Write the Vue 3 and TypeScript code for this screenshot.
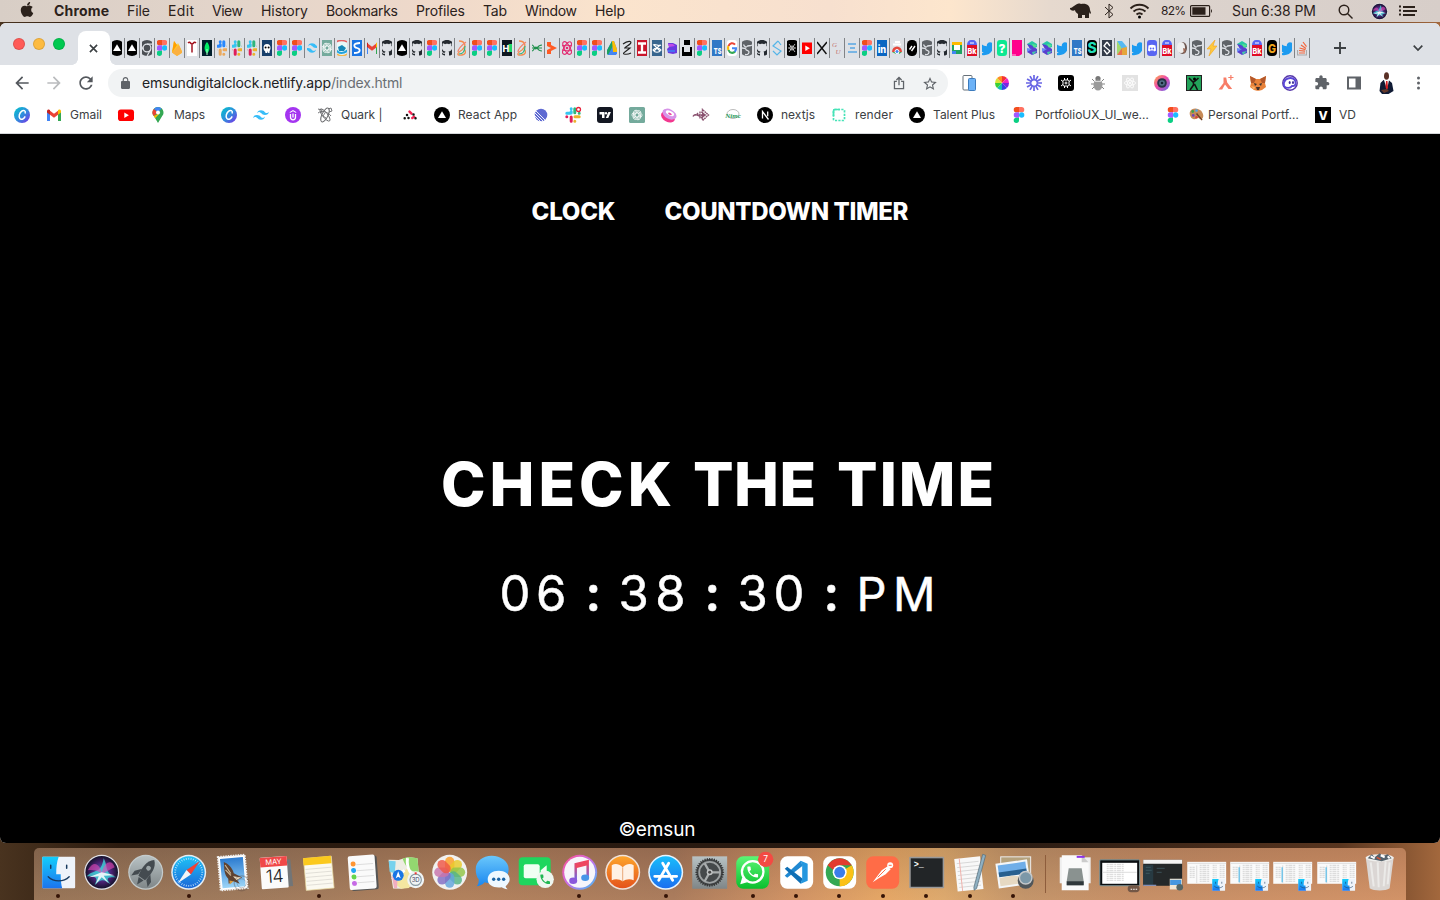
<script setup lang="ts">
import type { Directive } from 'vue'

// Spreads the letters of a label evenly over a given width in pixels.
const vFit: Directive<HTMLElement, number> = {
  mounted(el, { value }) {
    const count = (el.textContent ?? '').length
    const natural = el.getBoundingClientRect().width
    el.style.width = `${value}px`
    if (count > 1) el.style.letterSpacing = `${(value - natural) / (count - 1)}px`
  },
}

interface Label { text: string; width: number }
interface Bookmark { icon: string; text?: string; width?: number; extra?: string }
interface DockItem { name: string; running?: boolean }

const menus: Label[] = [
  { text: 'Chrome', width: 55 }, { text: 'File', width: 23 }, { text: 'Edit', width: 26 },
  { text: 'View', width: 31 }, { text: 'History', width: 47 }, { text: 'Bookmarks', width: 72 },
  { text: 'Profiles', width: 49 }, { text: 'Tab', width: 24 }, { text: 'Window', width: 52 },
  { text: 'Help', width: 30 },
]

const P = {
  apple: 'M318.7 268.7c-.2-36.7 16.4-64.4 50-84.8-18.8-26.9-47.2-41.7-84.7-44.6-35.5-2.8-74.3 20.7-88.5 20.7-15 0-49.4-19.7-76.4-19.7C63.3 141.2 4 184.8 4 273.5q0 39.3 14.4 81.2c12.8 36.7 59 126.7 107.2 125.2 25.2-.6 43-17.9 75.8-17.9 31.8 0 48.3 17.9 76.4 17.9 48.6-.7 90.4-82.5 102.6-119.3-65.2-30.7-61.7-90-61.7-91.9zm-56.6-164.2c27.3-32.4 24.8-61.9 24-72.5-24.1 1.4-52 16.4-67.9 34.9-17.5 19.8-27.8 44.3-25.6 71.9 26.1 2 49.9-11.4 69.5-34.2z',
  bird: 'M23.954 4.569c-.885.389-1.83.654-2.825.775 1.014-.611 1.794-1.574 2.163-2.723-.951.555-2.005.959-3.127 1.184-.896-.959-2.173-1.559-3.591-1.559-2.717 0-4.92 2.203-4.92 4.917 0 .39.045.765.127 1.124C7.691 8.094 4.066 6.13 1.64 3.161c-.427.722-.666 1.561-.666 2.475 0 1.71.87 3.213 2.188 4.096-.807-.026-1.566-.248-2.228-.616v.061c0 2.385 1.693 4.374 3.946 4.827-.413.111-.849.171-1.296.171-.314 0-.615-.03-.916-.086.631 1.953 2.445 3.377 4.604 3.417-1.68 1.319-3.809 2.105-6.102 2.105-.39 0-.779-.023-1.17-.067 2.189 1.394 4.768 2.209 7.557 2.209 9.054 0 13.999-7.496 13.999-13.986 0-.209 0-.42-.015-.63.961-.689 1.8-1.56 2.46-2.548l-.047-.02z',
  cat: 'M8 0C3.58 0 0 3.58 0 8c0 3.54 2.29 6.53 5.47 7.59.4.07.55-.17.55-.38 0-.19-.01-.82-.01-1.49-2.01.37-2.53-.49-2.69-.94-.09-.23-.48-.94-.82-1.13-.28-.15-.68-.52-.01-.53.63-.01 1.08.58 1.23.82.72 1.21 1.87.87 2.33.66.07-.52.28-.87.51-1.07-1.78-.2-3.64-.89-3.64-3.95 0-.87.31-1.59.82-2.15-.08-.2-.36-1.02.08-2.12 0 0 .67-.21 2.2.82.64-.18 1.32-.27 2-.27s1.36.09 2 .27c1.53-1.04 2.2-.82 2.2-.82.44 1.1.16 1.92.08 2.12.51.56.82 1.27.82 2.15 0 3.07-1.87 3.75-3.65 3.95.29.25.54.73.54 1.48 0 1.07-.01 1.93-.01 2.2 0 .21.15.46.55.38A8.01 8.01 0 0 0 16 8c0-4.42-3.58-8-8-8z',
  waves: 'M12 6c-3.2 0-5.2 1.6-6 4.8 1.2-1.6 2.6-2.2 4.2-1.8.913.228 1.565.89 2.288 1.624C13.666 11.818 15.027 13.2 18 13.2c3.2 0 5.2-1.6 6-4.8-1.2 1.6-2.6 2.2-4.2 1.8-.913-.228-1.565-.89-2.288-1.624C16.334 7.382 14.973 6 12 6zM6 13.2c-3.2 0-5.2 1.6-6 4.8 1.2-1.6 2.6-2.2 4.2-1.8.913.228 1.565.89 2.288 1.624C7.666 19.018 9.027 20.4 12 20.4c3.2 0 5.2-1.6 6-4.8-1.2 1.6-2.6 2.2-4.2 1.8-.913-.228-1.565-.89-2.288-1.624C10.334 14.582 8.973 13.2 6 13.2z',
  puzzle: 'M20.5 11H19V7c0-1.1-.9-2-2-2h-4V3.5C13 2.12 11.88 1 10.5 1S8 2.12 8 3.5V5H4c-1.1 0-1.99.9-1.99 2v3.8H3.5c1.49 0 2.7 1.21 2.7 2.7s-1.21 2.7-2.7 2.7H2V20c0 1.1.9 2 2 2h3.8v-1.5c0-1.49 1.21-2.7 2.7-2.7 1.49 0 2.7 1.21 2.7 2.7V22H17c1.1 0 2-.9 2-2v-4h1.5c1.38 0 2.5-1.12 2.5-2.5S21.88 11 20.5 11z',
  phone: 'M6.62 10.79c1.44 2.83 3.76 5.14 6.59 6.59l2.2-2.2c.27-.27.67-.36 1.02-.24 1.12.37 2.33.57 3.57.57.55 0 1 .45 1 1V20c0 .55-.45 1-1 1-9.39 0-17-7.61-17-17 0-.55.45-1 1-1h3.5c.55 0 1 .45 1 1 0 1.25.2 2.45.57 3.57.11.35.03.74-.25 1.02l-2.2 2.2z',
}

const spin = (angles: number[], make: (a: number, i: number) => string, cx = 0, cy = 0): string =>
  angles.map((a, i) => `<g transform="rotate(${a} ${cx} ${cy})">${make(a, i)}</g>`).join('')
const steps = (n: number): number[] => Array.from({ length: n }, (_, i) => (i * 360) / n)
const letter = (t: string, x: number, y: number, size: number, fill: string, extra = ''): string =>
  `<text x="${x}" y="${y}" font-family="Inter, sans-serif" font-weight="800" font-size="${size}" fill="${fill}" text-anchor="middle" ${extra}>${t}</text>`

const slack = (c: string[]): string =>
  `<g stroke-width="3" stroke-linecap="round" fill="none"><path stroke="${c[0]}" d="M1.8 6.2H5M6.2 1.8h.01M6.2 4.5V6"/><path stroke="${c[1]}" d="M9.8 1.8v4M14.2 6.2h.01"/><path stroke="${c[2]}" d="M10 9.8h4.2M9.8 14.2h.01"/><path stroke="${c[3]}" d="M6.2 10v4.2M1.8 9.8h.01"/></g>`
const knot = (color: string): string =>
  spin(steps(6), () => `<path d="M5.2 8.400V4.600L8.500 2.700a3 3 0 0 1 4.300 3.200M8 5.200l2.600 1.500" fill="none" stroke="${color}" stroke-width="1"/>`, 8, 8)
const atom = (color: string, w = 1): string =>
  spin([0, 60, 120], () => `<ellipse cx="8" cy="8" rx="7" ry="2.8" fill="none" stroke="${color}" stroke-width="${w}"/>`, 8, 8) +
  `<circle cx="8" cy="8" r="1.3" fill="${color}"/>`
const canva = `<circle cx="8" cy="8" r="8" fill="url(#canva)"/><path d="M11.2 5.9c.6-2.4-1.6-3.1-3.500-1.700-2.300 1.800-3.300 5.200-1.900 7.200 1.200 1.700 3.900.9 5.100-1.500" fill="none" stroke="#fff" stroke-width="1.500" stroke-linecap="round"/>`
const chromeMark = (r: number): string => {
  const h = r * 0.46
  const arc = (a: number, c: string) => `<path transform="rotate(${a})" d="M${-r * 0.866} ${-r / 2}A${r} ${r} 0 0 1 ${r * 0.866} ${-r / 2}H0A${h} ${h} 0 0 0 ${-h * 0.9} ${-h * 0.3}Z" fill="${c}"/>`
  return `<circle r="${r}" fill="#34a853"/><path d="M0 0V${r}A${r} ${r} 0 0 0 ${r * 0.866} ${-r / 2}Z" fill="#fbc116"/><path d="M${r * 0.43} ${r * 0.25}L0 ${r}A${r} ${r} 0 0 0 ${r * 0.5} ${r * 0.86}Z" fill="#fbc116"/>${arc(0, '#e33b2e')}<circle r="${r * 0.5}" fill="#fff"/><circle r="${r * 0.39}" fill="#3b7de9"/>`
}

const icons: Record<string, string> = {
  vercel: '<circle cx="8" cy="8" r="8"/><path d="M8 4.300l4 6.700H4z" fill="#fff"/>',
  chatdark: '<circle cx="8" cy="8" r="8" fill="#4b4f54"/><circle cx="8" cy="8" r="3.900" fill="none" stroke="#dee1e6" stroke-width="1.300"/><path d="M8 4.100h7.500M4.600 10L1 3.800M11.400 10L8 16" stroke="#dee1e6" stroke-width="1.200"/>',
  figma: '<path d="M5.400 0H8v5.330H5.400a2.660 2.660 0 0 1 0-5.330z" fill="#f24e1e"/><path d="M8 0h2.600a2.660 2.660 0 0 1 0 5.330H8z" fill="#ff7262"/><path d="M5.400 5.330H8v5.340H5.400a2.660 2.660 0 0 1 0-5.340z" fill="#a259ff"/><circle cx="10.660" cy="8" r="2.660" fill="#1abcfe"/><path d="M5.400 10.670H8v2.660a2.660 2.660 0 1 1-2.600-2.660z" fill="#0acf83"/>',
  firebase: '<path d="M3 12.500L5 1l3 4 1-2 4.500 9.500L8 16z" fill="#ffca28"/><path d="M3 12.500L5 1l3 4z" fill="#ffa000"/><path d="M3 12.500L10 5l3.500 7.500L8 16z" fill="#fbb040"/>',
  tee: '<rect width="16" height="16" fill="#fff"/><path d="M4 3c2-2 2.500 1 4 1s2-3 4-1M8 3.500v9" fill="none" stroke="#a31420" stroke-width="1.500"/>',
  mongo: '<rect width="16" height="16" rx="3" fill="#001e2b"/><path d="M8 2c3 3.500 3.500 8 0 11.500C4.500 10 5 5.500 8 2z" fill="#00ed64"/><path d="M8 9v6" stroke="#b8ffd0"/>',
  slackblue: slack(['#2788ff', '#2788ff', '#eba95d', '#eba95d']),
  slack: slack(['#36c5f0', '#2eb67d', '#ecb22e', '#e01e5a']),
  octo: '<rect width="16" height="16" rx="4" fill="#173f6b"/><path d="M4.500 8a3.500 4 0 1 1 7 0c0 2-1 2-1 5H9.200l-.4-2-.6 2H6.500l-.5-2c-1 0-1.500-1.500-1.500-3z" fill="#fff"/><circle cx="6.600" cy="7.500" r="1"/><circle cx="9.600" cy="7.500" r="1"/>',
  tailwind: `<g transform="scale(.667) translate(0 -1.200)"><path d="${P.waves}" fill="#38bdf8"/></g>`,
  openai: `<rect width="16" height="16" fill="#74aa9c"/><g transform="translate(1.600 1.600) scale(.8)">${knot('#fff')}</g>`,
  edge: '<circle cx="8" cy="8" r="7" fill="#e8f8f7"/><path d="M2 2c3-2 8-2 11 0" stroke="#e65f5f" fill="none" stroke-width="1.500"/><path d="M4 7l4-2 4 3-2 3H5z" fill="#1688b8"/><path d="M2 10c3 4 8 4 12 0" stroke="#25a3dd" stroke-width="2" fill="none"/><path d="M3 14c3 2 7 2 10 0" stroke="#f4b74c" fill="none" stroke-width="1.500"/>',
  sblue: `<rect width="16" height="16" rx="3" fill="#1b75e4"/><path d="M11 3C4 3 4 7 8 8s4 5-3 5" fill="none" stroke="#fff" stroke-width="1.800"/>`,
  gmail: '<path d="M1 14V4h3v10z" fill="#4285f4"/><path d="M12 14V4h3v10z" fill="#34a853"/><path d="M4 3.800l4 3 4-3v4l-4 3-4-3z" fill="#ea4335"/><path d="M1 5.500V4c0-1.700 2-2 3-1v4.800z" fill="#c5221f"/><path d="M15 5.500V4c0-1.700-2-2-3-1v4.800z" fill="#fbbc04"/>',
  github: `<path d="${P.cat}" fill="#24292f"/>`,
  loop: '<path d="M5 1c6 0 8 5 3 9-5 3-6 6 0 5 3-.5 4-2 3-5" fill="none" stroke="#f58b4b" stroke-width="1.300"/><path d="M11 6c0 7-4 8-6 8" fill="none" stroke="#35b37e" stroke-width="1.200"/><path d="M12 2C8 5 4 9 4 12" fill="none" stroke="#f1836c" stroke-width="1.200"/>',
  hacker: `<rect width="16" height="16" fill="#0e1720"/><path d="M9.500 4h3.500v8H9.500z" fill="#1ed669"/>${letter('H', 6.800, 11.500, 9, '#fff')}`,
  greenx: '<path d="M3 5c2 0 3 6 5 3s3-3 5-3M3 11c2 0 3-6 5-3s3 3 5 3M3 8h10" stroke="#20904d" fill="none" stroke-width="1.100"/>',
  play: '<path d="M3 2h4v3l6 3-6 3v3H3v-4l4-2-4-2z" fill="#ff5a24"/>',
  pinkatom: atom('#e22c72', 1.1),
  drive: '<path d="M8 1L2 12l2 3h8l2-3L10 1z" fill="#4285f4"/><path d="M8 1L2 12l2 3 6-11z" fill="#1aa260"/><path d="M8 1h2l4 11H9z" fill="#fbbc04"/>',
  zed: '<path d="M4 4c5-4 10-3 7 0-2 2-6 3-4 4h4c-3 3-8 5-6 6 2 .5 5 0 7-1M5 8h4" fill="none" stroke="#222" stroke-width="1.200"/>',
  ired: '<rect width="16" height="16" fill="#c9152b"/><path d="M4 3.500h8M4 12.500h8M8 3.500v9" stroke="#fff" stroke-width="2.300"/>',
  steel: '<rect width="16" height="16" fill="#37658e"/><path d="M4 5c3-2 5 2 8 0M4 10c2-3 6-3 8 0-2 3-6 3-8 0zm1-5l6 6M11 5l-6 6" fill="none" stroke="#fff" stroke-width="1.200"/>',
  blob: '<path d="M4 3h5l4 2v8l-4 1-5-1-1-4 2-2z" fill="#6a3ae0"/><path d="M4 4h5l2 2-6 1z" fill="#c04be8"/><path d="M4 11h7" stroke="#3a84f5" stroke-width="1.600"/>',
  black: '<path d="M5 0h6v5H5zM3 7h2v5h6V7h3v9H3z"/>',
  ts: `<rect width="16" height="16" fill="#3178c6"/>${letter('TS', 8.600, 14, 8, '#fff', 'textLength="7.600" lengthAdjust="spacingAndGlyphs"')}`,
  google: '<rect x="3" width="10" height="16" rx="3" fill="#fff"/><g fill="none" stroke-width="2.100"><path stroke="#ea4335" d="M4.500 6A4 4.700 0 0 1 11 4.600"/><path stroke="#fbbc05" d="M4.500 6a5 5 0 0 0 0 4"/><path stroke="#34a853" d="M4.500 10a4 4.700 0 0 0 6.500 1.500"/><path stroke="#4285f4" d="M8 8.200h4a5 5 0 0 1-1.200 3.500"/></g>',
  swirl: '<circle cx="8" cy="8" r="8" fill="#5f6368"/><path d="M3 8c2 0 4 .3 4 1.500S10 10 10 12s-2 3-4 2.500M13 5c-2 1.500-4 0-5 1.500S5 6 4.500 4.500" fill="none" stroke="#dee1e6" stroke-width="1.300"/>',
  slight: '<path d="M9 1L4 6l8 5-4 4-4-4M9 1l3 4" fill="none" stroke="#55b5e8" stroke-width="1.200"/>',
  oxo: '<rect x="2" width="12" height="16" rx="4"/><path d="M5 4l6 8M11 4l-6 8" stroke="#fff" stroke-width=".7"/><circle cx="8" cy="8" r="2" fill="none" stroke="#fff" stroke-width=".7"/><circle cx="5" cy="8" r=".7" fill="#fff"/><circle cx="11" cy="8" r=".7" fill="#fff"/>',
  youtube: '<rect y="2.500" width="16" height="11.500" rx="2.800" fill="#f00"/><path d="M6.300 5.600l4.600 2.600-4.600 2.700z" fill="#fff"/>',
  ex: '<path d="M3 2l9.500 12M13 2L3 14" stroke="#111" stroke-width="1.500"/>',
  gu: '<text x="3" y="7" font-family="Liberation Serif, serif" font-size="7" font-style="italic" fill="#c47571">G</text><text x="6.500" y="14" font-family="Liberation Serif, serif" font-size="7" font-style="italic" fill="#c47571">U</text>',
  lines: '<path d="M4 4h8M6 8h5M4 12h9" stroke="#58a7e4" stroke-width="1.400"/>',
  linkedin: `<rect width="16" height="16" rx="1" fill="#0a66c2"/>${letter('in', 8, 13, 11, '#fff', 'textLength="8.500" lengthAdjust="spacingAndGlyphs"')}`,
  rainbow: '<path d="M3 12a5 5.500 0 0 1 10 0z" fill="#e5483c"/><path d="M3 12h4v2zM10 12h3l-3 2z" fill="#34a853"/><circle cx="8" cy="11.500" r="2" fill="#4285f4" stroke="#fff"/><path d="M6 2h5M4 4.500h8" stroke="#fff" stroke-width="2"/>',
  slashes: '<rect x="3" width="10" height="16" rx="4.500"/><path d="M5.500 9.500L8 6M7.500 11l3.500-5" stroke="#fff" stroke-width="1.400"/>',
  square: '<path d="M3 2h11v12H3z" fill="#1fa463"/><path d="M3 2h11v3H3z" fill="#ffba00"/><path d="M5 5h6v5H5z" fill="#fff"/><path d="M3 11h4v3H3z" fill="#4285f4"/>',
  bk: `<path d="M3 5a4 5 0 0 1 4-5h2a4 5 0 0 1 4 5z" fill="#5865f2"/><path d="M1 5h14v11H1z" fill="#e00d26"/>${letter('Bk', 8, 14, 8, '#fff', 'textLength="9" lengthAdjust="spacingAndGlyphs"')}<path d="M6 3h4" stroke="#fff"/>`,
  twitter: `<g transform="scale(.667) translate(0 1)"><path d="${P.bird}" fill="#1d9bf0"/></g>`,
  question: `<rect x="3" width="10" height="16" rx="3" fill="#0be892"/>${letter('?', 8, 12.500, 12, '#fff')}`,
  pink: '<path d="M3 0h10v14l-3 2H3z" fill="#ff008c"/><path d="M3 14h4v2H3z" fill="#ff5ab5"/>',
  cube: '<path d="M3 4l5-3 5 3v3L8 9z" fill="#27c6a4"/><path d="M3 4l4 1 6 4v4l-5 2-5-3 3-3z" fill="#5840cf"/><path d="M3 8l5 1-5 3z" fill="#6b8bf5"/><path d="M8 4l5 1-3 3z" fill="#58e08d"/><path d="M8 12l5-1-4 4z" fill="#45c9a8"/>',
  tealS: `<rect x="3" width="10" height="16" rx="4"/>${letter('S', 8, 13, 14, '#24e0bc')}`,
  darkS: '<rect width="16" height="16" fill="#333b49"/><path d="M8 2L5 6l6 5-3 3-3-4M8 2l3 4" fill="none" stroke="#fff" stroke-width="1.300"/>',
  prism: '<path d="M3 1h5l5 6-5 3z" fill="#55b9f2"/><path d="M3 1l5 8-5 6z" fill="#a3d96c"/><path d="M8 8l5-1v8H8z" fill="#e5a63c"/><path d="M3 15l5-7v7z" fill="#e8704e"/>',
  discord: '<rect x="3" width="10" height="16" rx="3" fill="#5865f2"/><path d="M4.500 5.500q3.500-1.500 7 0l.5 5-1.500 1-1-1h-3l-1 1-1.500-1z" fill="#fff"/><circle cx="6.700" cy="8.500" r=".9" fill="#5865f2"/><circle cx="9.300" cy="8.500" r=".9" fill="#5865f2"/>',
  egg: '<ellipse cx="8.500" cy="8" rx="4.500" ry="6" fill="#6e5750"/><ellipse cx="7" cy="7.500" rx="4" ry="5.500" fill="#eee"/><path d="M9 8l3 1-2 5z" fill="#9f6c59"/>',
  bolt: '<path d="M11 0L3 9h4l-2 7 8-10H9z" fill="#ffc93d" stroke="#f1a21c" stroke-width=".6"/>',
  orangeG: `<rect x="3" width="10" height="16" rx="4"/>${letter('G', 8, 12.500, 12, '#eda51d', 'textLength="8" lengthAdjust="spacingAndGlyphs"')}`,
  stack: '<path d="M3.500 10v5h9v-5" fill="none" stroke="#aaa" stroke-width="1.200"/><path d="M5 13h6M5 10.500l6 .6M5.500 8l6 1.700M7 5l5 3.400M9 2l3.500 4.600" stroke="#f4663c" stroke-width="1.200"/>',
  maps: '<path d="M8 0a5.500 5.500 0 0 0-4.200 9L8 16l4.200-7A5.500 5.500 0 0 0 8 0z" fill="#34a853"/><path d="M8 0a5.500 5.500 0 0 0-4.200 2L8 5.500l3.500-4.100A5.500 5.500 0 0 0 8 0z" fill="#4285f4"/><path d="M3.800 2A5.500 5.500 0 0 0 3.700 9L8 5.500z" fill="#ea4335"/><path d="M3.700 9l1.500 2.300L10 6z" fill="#fbbc04"/><circle cx="8" cy="5.500" r="2" fill="#fff"/>',
  canva,
  udemy: '<circle cx="8" cy="8" r="8" fill="#a435f0"/><path d="M4.800 5L8 3l3.200 2v1L8 4.200 4.800 6z" fill="#fff"/><path d="M5.500 7v3.300c0 3.300 5 3.300 5 0V7M8 6.500v4" fill="none" stroke="#fff" stroke-width="1.300"/>',
  quark: '<g fill="none" stroke="#68696c" stroke-width=".9"><ellipse cx="8" cy="8" rx="3" ry="7.500" transform="rotate(25 8 8)"/><ellipse cx="8" cy="8" rx="2.500" ry="7.500" transform="rotate(-38 8 8)"/><path d="M1 6c4-3 10-1 13 3M1 2l4 1-1 3M11 2l3-1 1 3-3 1M8 6l-2 3 3 2"/></g>',
  dots: '<g stroke-linecap="round" stroke-width="2.500" fill="none"><path d="M7.500 4.700l2 2M10.300 11l1.800-1.200" stroke="#f42554"/><path d="M5 8h.01M2.700 11.300h.01M6.500 11h.01M11.500 7.500h.01M13.500 11.300h.01" stroke="#111"/></g>',
  linear: '<circle cx="8" cy="8" r="6.300" fill="#5e6ad2"/><path d="M1 5l10 10M1 8l7 7M2.500 3.500l11 11" stroke="#fff" stroke-width=".9"/>',
  slackdot: slack(['#36c5f0', '#2eb67d', '#ecb22e', '#e01e5a']) + '<circle cx="13.500" cy="2.500" r="2" fill="#fff" stroke="#e7243c" stroke-width="1.300"/>',
  tv: '<rect width="16" height="16" rx="3" fill="#131722"/><path d="M2.500 5h5v6H5V7.500H2.500zM11.400 5h2.500l-2.600 6H8.800z" fill="#fff"/><circle cx="9" cy="6.200" r="1.200" fill="#fff"/>',
  openaib: `<rect width="16" height="16" rx="1.500" fill="#74aa9c"/><g transform="translate(1.600 1.600) scale(.8)">${knot('#fff')}</g>`,
  candy: '<g transform="rotate(28 8 8)"><ellipse cx="8" cy="10" rx="7.500" ry="5" fill="#f2388f"/><ellipse cx="8" cy="7" rx="7.500" ry="4.800" fill="#d793e8"/><ellipse cx="8" cy="6" rx="4.500" ry="2.200" fill="#fff"/><ellipse cx="8.300" cy="6.500" rx="2" ry="1" fill="#ed4ba6"/></g>',
  arrows: '<path d="M0 9.500c3-5 6 2 9-1M1 8h9M4 6l3 4M9.500 2.500v2.800H7v5.400h2.500v2.800l6-5.500z" fill="none" stroke="#8a5270" stroke-width="1.400" stroke-dasharray="1.800 .5"/><path d="M9 5l4.500 3L9 11z" fill="#8a5270"/>',
  nimc: '<ellipse cx="8" cy="7" rx="6" ry="4.500" fill="none" stroke="#aaa" stroke-width=".8"/><text x="8" y="10.500" font-family="Liberation Serif, serif" font-size="7" font-style="italic" font-weight="700" fill="#299a5a" text-anchor="middle">Nimc</text>',
  next: '<circle cx="8" cy="8" r="8"/><path d="M5.500 11.500v-7l6 8M10.700 4.500v4.800" fill="none" stroke="#fff" stroke-width="1.300"/>',
  render: '<rect x="2.500" y="2.500" width="11" height="11" rx="1" fill="none" stroke="#46e3b7" stroke-width="1.700" stroke-dasharray="2.200 1.200"/><path d="M2.500 9V4q0-1.500 1.500-1.500h5" stroke="#46e3b7" stroke-width="1.700" fill="none"/>',
  vd: `<rect width="16" height="16"/>${letter('V', 8, 12.500, 12, '#fff')}`,
  palette: '<path d="M1 5c2-5 9-4 12-1 3 4 3 8 0 9-2 .6-2-2-4-1s-4 2-6 0c-1-1-3-4-2-7z" fill="#c68b58"/><circle cx="4" cy="4.800" r="1.500" fill="#3fa34d"/><circle cx="8" cy="3.800" r="1.400" fill="#4ea4e8"/><circle cx="4.500" cy="9" r="1.500" fill="#7244b8"/><circle cx="8" cy="11" r="1.300" fill="#d64141"/><path d="M8 7l6 7" stroke="#713f23" stroke-width="1.500"/>',
  devices: '<rect x="1" y=".5" width="9" height="14.500" rx="1" fill="#fff" stroke="#667079"/><rect x="6.500" y="3.500" width="7" height="12" rx="1" fill="#6cb2f7" stroke="#3c7bbd"/>',
  wheel: spin(steps(8), (_, i) => `<path d="M8 8V1a7 7 0 0 1 4.950 2.050z" fill="${['#f43333', '#ec25c5', '#7a25e0', '#3545e5', '#15bdb5', '#39cf35', '#d8e337', '#ff8c21'][i]}"/>`, 8, 8),
  burst: spin(steps(12), () => '<path d="M8 5V0" stroke="#6865e4" stroke-width="1.700"/>', 8, 8) + '<circle cx="8" cy="8" r="3.200" fill="none" stroke="#6865e4" stroke-width="1.300"/>',
  chip: '<rect width="16" height="16" rx="3"/><g fill="none" stroke="#fff" stroke-width="1"><rect x="5" y="5" width="6" height="6" rx="1.500"/><circle cx="8" cy="8" r="1"/><path d="M6.500 5V3M9.500 5V3M6.500 11v2M9.500 11v2M5 6.500L3 5M5 9.500L3 11M11 6.500L13 5M11 9.500l2 1.500"/></g>',
  bug: '<g fill="none" stroke="#858585"><path d="M2 4l3 3M14 4l-3 3M1 9h14M2 14l3-3M14 14l-3-3"/></g><circle cx="8" cy="3.500" r="2.600" fill="#777"/><ellipse cx="8" cy="10" rx="4.500" ry="5.500" fill="#9b9b9b"/><path d="M4.500 6.500h7" stroke="#d8d8d8"/>',
  atomgrey: `<rect width="16" height="16" fill="#e2e2e2"/><g transform="translate(1.600 1.600) scale(.8)">${atom('#fff', 1)}</g>`,
  camera: '<circle cx="8" cy="8" r="8" fill="url(#cam)"/><circle cx="8" cy="8" r="4.800" fill="#263447"/><circle cx="8" cy="8" r="2.800" fill="#52718a"/><circle cx="8" cy="8" r="1.300" fill="#152132"/>',
  dancer: '<rect x=".5" y=".5" width="15" height="15" fill="#22a35a" stroke="#222"/><path d="M3 3l4 4 2-1 3.500-3M7.500 6v4L4 15M8.500 9l3 6" stroke="#111" stroke-width="1.600" fill="none"/><circle cx="8.500" cy="4" r="1.500"/>',
  aplus: '<path d="M5.500 2.500h2.700l1 5 5 6.500h-3.700L7 9.500l-2.800 5H.5l5-6.500zM12.300 0h1.200v2H15.500v1.100h-2v2h-1.200v-2h-2V2h2z" fill="#f77d67"/>',
  fox: '<path d="M0 1l6 3h4l6-3-1 7 1 4-4 3-3 .7H7L4 15l-4-3 1-4z" fill="#e8823a"/><path d="M0 1l6 3-2 4-3 0zM16 1l-6 3 2 4h3z" fill="#b4582b"/><path d="M4 8l3 1-2 2zM12 8L9 9l2 2z" fill="#333"/><path d="M6 12h4l-1 3H7z" fill="#40302b"/><path d="M1 11l4 1-1 3z" fill="#f7b36b"/>',
  ghost: '<circle cx="8" cy="8" r="7.200" fill="#fff" stroke="#5739a9" stroke-width="1.500"/><path d="M2 11C1 5 5 3 8.500 3c4 0 5.500 3 5 6-.5 2.500-2 2-3.500 2-1.500 2.500-6 2.500-8 0z" fill="#fff" stroke="#5a46d7" stroke-width="1.800"/><ellipse cx="7.700" cy="7.500" rx="1" ry="1.500" fill="#3f2f9d"/><ellipse cx="11" cy="7.500" rx="1" ry="1.500" fill="#3f2f9d"/>',
  puzzle: `<g transform="translate(0 -.300) scale(.667)"><path d="${P.puzzle}" fill="#5f6368"/></g>`,
  panel: '<path d="M1 1.500h14v13H1zM3 3.500v9h6.500v-9z" fill="#5f6368" fill-rule="evenodd"/>',
  man: '<path d="M1.500 16l1-8 3-3h5l3.500 3 1.500 8-5 3H4z" fill="#101b34"/><path d="M6 5h5l-1 5-1.500 3z" fill="#fff"/><path d="M8 6h1.500l.5 7-1.300 2L7.500 12z" fill="#d51e22"/><ellipse cx="8.500" cy="1" rx="2.500" ry="3.800" fill="#5a3126"/><path d="M3 15l6-1 2 2-5 2z" fill="#65392b"/>',
  kebab: '<g fill="#5f6368"><circle cx="8.500" cy="3" r="1.500"/><circle cx="8.500" cy="8" r="1.500"/><circle cx="8.500" cy="13" r="1.500"/></g>',
}

const tabs = ('vercel vercel chatdark figma firebase tee mongo slackblue slack slack octo figma figma tailwind openai edge sblue gmail ' +
  'github vercel github figma github loop figma figma hacker loop greenx play pinkatom figma figma drive zed ired steel blob black figma ts google ' +
  'swirl github slight oxo youtube ex gu lines figma linkedin rainbow slashes swirl github square bk twitter question pink cube cube twitter ts ' +
  'tealS darkS prism twitter discord bk egg swirl bolt swirl cube bk orangeG twitter stack').split(' ')

const extensions = 'devices wheel burst chip bug atomgrey camera dancer aplus fox ghost puzzle panel man kebab'.split(' ')

const bookmarks: Bookmark[] = [
  { icon: 'canva' }, { icon: 'gmail', text: 'Gmail', width: 32 }, { icon: 'youtube' },
  { icon: 'maps', text: 'Maps', width: 31 }, { icon: 'canva' }, { icon: 'tailwind' }, { icon: 'udemy' },
  { icon: 'quark', text: 'Quark |', width: 41.5 }, { icon: 'dots' }, { icon: 'vercel', text: 'React App', width: 59 },
  { icon: 'linear' }, { icon: 'slackdot' }, { icon: 'tv' }, { icon: 'openaib' }, { icon: 'candy' }, { icon: 'arrows' },
  { icon: 'nimc' }, { icon: 'next', text: 'nextjs', width: 34 }, { icon: 'render', text: 'render', width: 38 },
  { icon: 'vercel', text: 'Talent Plus', width: 62 }, { icon: 'figma', text: 'PortfolioUX_UI_we…', width: 114 },
  { icon: 'figma', text: 'Personal Portf…', width: 91, extra: 'palette' }, { icon: 'vd', text: 'VD', width: 17 },
]

const tick = (n: number, r1: number, r2: number, c: string, w: number): string =>
  spin(steps(n), () => `<path d="M0 ${-r1}V${-r2}" stroke="${c}" stroke-width="${w}"/>`)
const finderFace = '<rect x="-16.500" y="-15.500" width="33" height="31.500" rx="1" fill="#eef3fa"/><path d="M-16.500-15.500H0C-2-10-2.500-5-2.500 2H2c0 6 .5 10 1.500 14h-20z" fill="url(#finder)"/><path d="M-8-7v3M8-7v3" stroke="#17395e" stroke-width="1.500" stroke-linecap="round"/><path d="M-10.500 4.500C-5 10 5 10 10.500 4.500" fill="none" stroke="#17395e" stroke-width="1.400" stroke-linecap="round"/>'
const badge = `<g transform="translate(12 12.500) scale(.39 .37)">${finderFace}</g>`
const rows = (x: number, y: number, w: number, n: number): string =>
  Array.from({ length: n }, (_, i) => `<path d="M${x} ${y + i * 2}h${w}" stroke="#c4c4c4" stroke-width=".7" stroke-dasharray="2 .7 4 .8"/>`).join('')
const folder = `<rect x="-19.500" y="-10.500" width="39" height="22" fill="#fafafa"/><path d="M-19.500-9h39M-10-7v18" stroke="#ddd"/>${rows(-17, -5, 5, 6)}${rows(-7, -7, 10, 9)}${rows(6, -7, 4, 9)}${rows(13, -7, 5, 7)}`
const folderBlue = '<path d="M-10.500-5v15" stroke="#75c5e8" stroke-width="1.500"/>'

const dockArt: Record<string, string> = {
  finder: finderFace,
  siri: '<circle r="17.500" fill="#e4e4ea"/><circle r="16.300" fill="url(#siri)"/><path d="M-15 4C-7-4-1 3 2-14C7-5 2 1 15 5C7 5 3 5 9 12C3 8 0 5-7 13C-4 6-4 4-15 4z" fill="#3fe0dd" opacity=".75"/><path d="M-14-2C-8-13-2-8 0 0C4-13 11-12 13-5C8-3 4 0 1 2C-4-2-8-3-14-2z" fill="#e84ab8" opacity=".6"/><path d="M-13 5L0 0L13 3L2 3.500L7 11L0 5L-6 12L-3 4z" fill="#fff" opacity=".85"/>',
  launchpad: '<circle r="17.500" fill="#c5cccd"/><circle r="16.300" fill="url(#silver)"/><g transform="rotate(35)" fill="#444b50"><path d="M0-15C6-10 6-2 4 7H-4C-6-2-6-10 0-15z"/><path d="M-5-1l-5 6v6l5-5zM5-1l5 6v6L5 6zM-3 8h6L0 15z"/><circle cy="-5" r="2.400" fill="#9ba4a6"/></g>',
  safari: `<circle r="17.500" fill="#e6edf2"/><circle r="16" fill="url(#safari)"/>${tick(36, 14.5, 12.7, '#d8f2ff', 0.7)}<path d="M11-11L2.200 2.200-2.200-2.200z" fill="#f14133"/><path d="M-11 11L-2.200-2.200 2.200 2.200z" fill="#f4f5f6"/>`,
  mail: '<g transform="rotate(-5)"><rect x="-13.500" y="-16.500" width="27" height="33.500" fill="#fff" stroke="#f2f2f2" stroke-width="2" stroke-dasharray="1.500 1"/><rect x="-11.500" y="-14.500" width="23" height="29.500" fill="url(#sky)"/><path d="M-8-11c4 2 8 6 9 12l8 5-5 2 2 4-6-3-5 2 0-5c-4-4-3-11-3-17z" fill="#5f4230"/><path d="M-7-8l5 9M-7-3l5 6" stroke="#c9b494" stroke-width="1.200"/><path d="M0 4l8 2-5 2z" fill="#f0e2c8"/><path d="M-4 8l4 1-4 3z" fill="#d99a3c"/></g><circle cx="9" cy="11" r="7.500" fill="none" stroke="#5c4b42" stroke-width="1.300" opacity=".35"/><circle cx="9" cy="11" r="4.500" fill="none" stroke="#4a4a55" opacity=".3"/>',
  calendar: '<g transform="rotate(-4)"><path d="M-11-12h26.500l1 27h-27z" fill="#727577"/><rect x="-15" y="-15.500" width="27" height="31.500" rx="1" fill="#fbfbfb"/><path d="M-15-15.500h27v9.500h-27z" fill="#f04848"/><text x="-1.500" y="-8" font-family="Inter, sans-serif" font-size="7.500" fill="#fff" text-anchor="middle">MAY</text><text x="-1.500" y="10" font-family="Inter, sans-serif" font-size="18" font-weight="300" fill="#222" text-anchor="middle" letter-spacing="-.5">14</text></g>',
  notes: '<g transform="rotate(-5)"><path d="M-14-15h28v32h-28z" fill="#fbf9f0" stroke="#e6d79e" stroke-width=".7"/><path d="M-14.500-15.500h28v7.500h-28z" fill="#fbc91e"/><path d="M-13-4h26M-13 0h26M-13 4h26M-13 8h26M-13 12h26" stroke="#dcdad2" stroke-width=".8"/></g>',
  reminders: '<g transform="rotate(-4)"><rect x="-12" y="-16" width="27" height="34" rx="2" fill="#555"/><rect x="-14" y="-17" width="27" height="34" rx="2" fill="#fafafa"/><g stroke="#ddd"><path d="M-6-8H11M-6-2H11M-6 4H11M-6 10H11"/></g><g><circle cx="-9" cy="-9" r="2.500" fill="#ff9532"/><circle cx="-9" cy="-2.500" r="2.500" fill="#21a6f3"/><circle cx="-9" cy="4" r="2.500" fill="#63d54b"/><circle cx="-9" cy="10.500" r="2.500" fill="#c66ae5"/></g></g>',
  maps: '<g transform="rotate(-5)"><path d="M-16-14l10 1 10-2 9 2v29l-9-1-10 1-8-1z" fill="#eeece3"/><path d="M-16-13l7 1-2 12-5-2z" fill="#77d2ed"/><path d="M-2-14c3 12 8 12 15 18v-17l-8-2z" fill="#93d870"/><path d="M-14 8L2-4l6 8-6 12h-8z" fill="#f4e6a0"/><path d="M3-14c-2 10 2 18 10 22M-14 6l13-8" fill="none" stroke="#fff" stroke-width="3"/><path d="M-14 3l6-2-2 14h-3z" fill="#f1adc0"/></g><circle cx="-7.500" cy="3" r="5.500" fill="#1976e5"/><path d="M-7.500-1l2.500 7-2.500-1.500-2.500 1.500z" fill="#fff"/><circle cx="10" cy="7.500" r="8.500" fill="#f1f5f6"/><circle cx="10" cy="7.500" r="5.700" fill="none" stroke="#899ba4" stroke-width="1.200"/><text x="10" y="9.700" text-anchor="middle" font-family="Inter, sans-serif" font-size="6" fill="#446">3D</text><path d="M10 0v2" stroke="#ef3a32" stroke-width="2"/>',
  photos: '<circle r="17.500" fill="#f1f1f0"/>' + spin(steps(8), (_, i) => `<rect x="-4.700" y="-15.500" width="9.400" height="15" rx="4.700" fill="${['#fd9d26', '#e9ca2b', '#93c548', '#55b487', '#63a5dc', '#816ec4', '#c875ad', '#ee5847'][i]}" opacity=".83"/>`),
  messages: '<path d="M-17-3C-17-11-10-16.500-1-16.500S16-11 16-3 9 11-1 11c-3 0-5 0-7-1-3 3-6 4-8 4 2-2 2-5 2-7-2-2-3-6-3-10z" fill="url(#msg)"/><path d="M-5 7C-5 2 0-1.500 6-1.500S17 2 17 7c0 3-2 5-4 7 0 1 1 2 2 3-3 0-4-1-6-2C1 16-5 13-5 7z" fill="#eef8ff"/><g fill="#1b64a5"><circle cx="1" cy="7" r="1.700"/><circle cx="6" cy="7" r="1.700"/><circle cx="11" cy="7" r="1.700"/></g>',
  facetime: '<rect x="-17" y="-15" width="32" height="28" rx="4" fill="#1ed65e"/><rect x="-12" y="-8" width="16" height="14" rx="2" fill="#f0fff3"/><path d="M5-2l6-5v11l-6-4z" fill="#f0fff3"/><circle cx="9.500" cy="7" r="8.700" fill="#eef6ef"/><g transform="translate(3 .500) scale(.54)"><path d="' + P.phone + '" fill="#20b752"/></g>',
  itunes: '<circle r="17.500" fill="url(#tunes)"/><circle r="15.500" fill="#f7f5fb"/><path d="M-4 8V-8L8-11V5" fill="none" stroke="url(#note)" stroke-width="2.500"/><path d="M-4-8L8-11v4L-4-4z" fill="#ef475f"/><ellipse cx="-6.500" cy="8.500" rx="4" ry="3.200" fill="#8a59dc"/><ellipse cx="5.500" cy="5.500" rx="4" ry="3.200" fill="#4795e8"/>',
  books: '<circle r="17.500" fill="#f0e3dc"/><circle r="16" fill="url(#books)"/><path d="M0-5C-4-9-8-9-11-7V8c4-2 8-1 11 1 3-2 7-3 11-1V-7C8-9 4-9 0-5z" fill="#fff1e5"/><path d="M0-5V9" stroke="#e9a878"/>',
  appstore: '<circle r="17.500" fill="#e8f5ff"/><circle r="16" fill="url(#store)"/><path d="M-7 8L3-9M7 8L-3-9M-11 4H3M6.500 4H11" stroke="#fff" stroke-width="2.800" stroke-linecap="round"/>',
  settings: `<rect x="-17.500" y="-16" width="35" height="32.500" fill="url(#silver)"/><circle r="13.300" fill="#45494b"/>${tick(36, 14.4, 12, '#333', 1.1)}<circle r="10.500" fill="none" stroke="#9da1a2" stroke-width="1.800"/><g stroke="#a9adae" stroke-width="2.300"><path d="M0 0L-5-9M0 0h10.500M0 0l-5 9"/></g><circle r="3" fill="#bfc2c3"/><circle r="1.500" fill="#444"/>`,
  whatsapp: '<rect x="-16.500" y="-16" width="33" height="32.500" rx="7" fill="url(#wa)"/><circle cy="-.5" r="10.800" fill="none" stroke="#fff" stroke-width="2.300"/><path d="M-12.500 12l2-7 5 5z" fill="#fff"/><g transform="translate(-7.200 -7.500) scale(.6)"><path d="' + P.phone + '" fill="#fff"/></g><circle cx="13" cy="-13" r="7.700" fill="#f34a43"/><text x="13" y="-10" text-anchor="middle" font-family="Inter, sans-serif" font-size="8.500" fill="#fff">7</text>',
  vscode: '<rect x="-16.500" y="-16" width="33" height="32.500" rx="7" fill="#fff"/><path d="M4-11.500l2 5L-9.500 5.500-12 3.500z" fill="#2089d2"/><path d="M4 11.500l2-5L-9.500-5.500-12-3.500z" fill="#0f6fb5"/><path d="M4-11.500l7 3V8.500l-7 3 1.500-5v-13z" fill="#2497df"/>',
  chrome: `<rect x="-16.500" y="-16" width="33" height="32.500" rx="7" fill="#fff"/>${chromeMark(14)}`,
  postman: '<rect x="-16.500" y="-16" width="33" height="32.500" rx="7" fill="#ff6c47"/><path d="M-10 10L-1-2 5-6l3 3-5 5-7 4z" fill="#fff"/><circle cx="7.500" cy="-7" r="3" fill="#fff"/><path d="M-5 5l8-8M6-7h3" stroke="#ff6c47"/>',
  terminal: '<rect x="-17.500" y="-15.500" width="35" height="31.500" rx="1" fill="#999"/><rect x="-16" y="-14" width="32" height="28.500" fill="#222527"/><text x="-13" y="-5" font-family="Liberation Mono, monospace" font-weight="700" font-size="8.500" fill="#fff">&gt;_</text>',
  textedit: '<g transform="rotate(-6)"><rect x="-14" y="-15" width="26" height="33" fill="#f8f8f8"/><path d="M-12-10h22M-12-6h22M-12-2h22M-12 2h22M-12 6h22M-12 10h22M-12 14h22" stroke="#ccc" stroke-width=".7"/><path d="M-9-15v33" stroke="#efb3ad"/></g><path d="M13-18l3 1L7 16l-2.500 2-.3-3z" fill="#8fb0c2" stroke="#536b78" stroke-width=".7"/>',
  preview: '<rect x="-13" y="-15.500" width="30" height="27" fill="#b5a27d" stroke="#eee"/><g transform="rotate(-8)"><rect x="-17" y="-11" width="32" height="25" fill="#f4f6f7"/><rect x="-15" y="-9" width="28" height="10" fill="#6faee8"/><path d="M-15-2h28v5h-28z" fill="#28608f"/><path d="M-15 4l12-1 16 3v6h-28z" fill="#e6d9c2"/></g><circle cx="12" cy="8.500" r="8" fill="#50565a"/><circle cx="12" cy="5.500" r="6.300" fill="#7c98a8" stroke="#c5c8ca" stroke-width="1.500"/>',
  disk: '<path d="M-16-15h31v26h-31z" fill="#eee"/><path d="M-14-17H6l7 7v28h-27z" fill="#fafafa"/><path d="M6-17l7 7H6z" fill="#ccc"/><path d="M1-15.500h8" stroke="#8a31e8" stroke-width="2"/><path d="M-7-4H6l2 13v4H-9V9z" fill="#8a9290"/><path d="M-9 9H8v4H-9z" fill="#30383b"/>',
  window: `<rect x="-20" y="-12.500" width="40" height="26" rx="1" fill="#0b0f12" stroke="#7e9699"/><rect x="-17.500" y="-9.500" width="35" height="21" fill="#fff"/>${rows(-13, -8, 17, 9)}<path d="M-17 0h34" stroke="#ddd"/><rect x="8" y="13" width="12" height="7" rx="3.500" fill="#735746"/><path d="M11 17h7" stroke="#fff" stroke-width="1.200" stroke-dasharray="1.500 1"/>`,
  editor: '<rect x="-19.500" y="-12.500" width="39" height="26" fill="#242829"/><path d="M-19.500-12.500h39v4h-39z" fill="#f4f4f4"/><path d="M-19.500-7.500h10v20h-10z" fill="#273a42"/><path d="M-17-5h5M-17-2h6M-17 1h4M-6-4H2M-6 0h5" stroke="#45636c" stroke-width=".7"/><path d="M-19.500 13h13" stroke="#9ad"/><g transform="translate(13 12) scale(.37)"><rect x="-16" y="-15" width="33" height="29" fill="#f2e7d3"/><path d="M-15-12h30v14h-30z" fill="#4597df"/><circle cx="11" cy="8" r="9" fill="#566"/></g>',
  folder1: folder + badge,
  folder2: folder + folderBlue + badge,
  trash: '<path d="M-14-15H14L10 16C6 19-6 19-10 16z" fill="#dcdad8" opacity=".96"/><path d="M-9-10L-6 14M-2-10L-1 15M6-11L4 14M10-10L8 12" stroke="#ebeae8" stroke-width="2" fill="none"/><ellipse cy="-14.500" rx="14" ry="3.700" fill="#f0f0ee"/><path d="M-12-14l4-4 3 3 5-4 3 3 5-2 4 4-10 3z" fill="#53616b"/><path d="M-9-16l4 2M1-17l4 2M8-16l2 2" stroke="#fff" stroke-width="2"/><path d="M-3-15l4 2" stroke="#d65337" stroke-width="1.500"/>',
}

const dockApps: DockItem[] = [
  { name: 'finder', running: true }, { name: 'siri' }, { name: 'launchpad' }, { name: 'safari', running: true },
  { name: 'mail' }, { name: 'calendar' }, { name: 'notes', running: true }, { name: 'reminders' }, { name: 'maps' },
  { name: 'photos' }, { name: 'messages' }, { name: 'facetime' }, { name: 'itunes', running: true }, { name: 'books' },
  { name: 'appstore', running: true }, { name: 'settings' }, { name: 'whatsapp', running: true },
  { name: 'vscode', running: true }, { name: 'chrome', running: true }, { name: 'postman', running: true },
  { name: 'terminal', running: true }, { name: 'textedit', running: true }, { name: 'preview', running: true },
]
const dockRight = ['disk', 'window', 'editor', 'folder1', 'folder2', 'folder2', 'folder2', 'trash']

const heading: Label[] = [{ text: 'CHECK', width: 231 }, { text: 'THE', width: 123 }, { text: 'TIME', width: 157 }]
const clock: Label[] = [
  { text: '06', width: 67 }, { text: ':', width: 14 }, { text: '38', width: 67 }, { text: ':', width: 14 },
  { text: '30', width: 67 }, { text: ':', width: 14 }, { text: 'PM', width: 79 },
]
</script>

<template>
  <div class="desktop">
    <svg class="defs" width="0" height="0">
      <defs>
        <linearGradient id="canva" x1="0" y1="0" x2="1" y2="1"><stop offset="0" stop-color="#00c4cc" /><stop offset=".5" stop-color="#2f8fdc" /><stop offset="1" stop-color="#7d2ae8" /></linearGradient>
        <linearGradient id="cam" x1="0" y1="0" x2="1" y2="1"><stop offset="0" stop-color="#ffb04a" /><stop offset=".45" stop-color="#ef4ba8" /><stop offset="1" stop-color="#5b6bf0" /></linearGradient>
        <linearGradient id="finder" x1="0" y1="0" x2="0" y2="1"><stop offset="0" stop-color="#13cdfc" /><stop offset="1" stop-color="#1c74ee" /></linearGradient>
        <radialGradient id="siri"><stop offset="0" stop-color="#4a78c8" /><stop offset=".6" stop-color="#4a2273" /><stop offset="1" stop-color="#14122c" /></radialGradient>
        <linearGradient id="silver" x1="0" y1="0" x2="0" y2="1"><stop offset="0" stop-color="#b8c2c4" /><stop offset="1" stop-color="#7f8688" /></linearGradient>
        <linearGradient id="safari" x1="0" y1="0" x2="0" y2="1"><stop offset="0" stop-color="#1fc2f6" /><stop offset="1" stop-color="#1b67d8" /></linearGradient>
        <linearGradient id="sky" x1="0" y1="0" x2="0" y2="1"><stop offset="0" stop-color="#2b7bd0" /><stop offset="1" stop-color="#9bd4f7" /></linearGradient>
        <linearGradient id="msg" x1="0" y1="0" x2="0" y2="1"><stop offset="0" stop-color="#6ac7fb" /><stop offset="1" stop-color="#1a87f0" /></linearGradient>
        <linearGradient id="tunes" x1="0" y1="0" x2="1" y2="1"><stop offset="0" stop-color="#ff4f8c" /><stop offset=".5" stop-color="#c86fe8" /><stop offset="1" stop-color="#3cc3f5" /></linearGradient>
        <linearGradient id="note" x1="0" y1="0" x2="0" y2="1"><stop offset="0" stop-color="#f2455f" /><stop offset="1" stop-color="#6a68e5" /></linearGradient>
        <linearGradient id="books" x1="0" y1="0" x2="0" y2="1"><stop offset="0" stop-color="#fda42c" /><stop offset="1" stop-color="#e4531c" /></linearGradient>
        <linearGradient id="store" x1="0" y1="0" x2="0" y2="1"><stop offset="0" stop-color="#18bdfb" /><stop offset="1" stop-color="#1b6ff0" /></linearGradient>
        <linearGradient id="wa" x1="0" y1="0" x2="0" y2="1"><stop offset="0" stop-color="#5bf675" /><stop offset="1" stop-color="#0abf2e" /></linearGradient>
      </defs>
    </svg>

    <header class="menubar">
      <svg class="apple" viewBox="0 0 384 512"><path :d="P.apple" /></svg>
      <span v-for="m in menus" :key="m.text" v-fit="m.width" class="menu" :class="{ strong: m.text === 'Chrome' }">{{ m.text }}</span>
      <div class="status">
        <svg class="elephant" viewBox="0 0 21 16"><path d="M0 5c2 0 2-1 4-2 3-2 4-3 7-2 6-1 9 2 9 6l1 3-1 1-1-2v6h-4v-3h-3v3H8v-4C6 10 5 8 5 7 4 8 1 8 0 6z" /></svg>
        <svg class="bluetooth" viewBox="0 0 10 16"><path d="M1 4l8 7.500L5 15V1l4 3.500L1 12" /></svg>
        <svg class="wifi" viewBox="0 0 21 16"><path d="M1.500 5.500c5-5 13-5 18 0M4.500 8.500c3.500-3.300 8.500-3.300 12 0M7.500 11.500c2-1.700 4-1.700 6 0" /><circle cx="10.500" cy="14" r="1.500" /></svg>
        <span v-fit="25" class="percent">82%</span>
        <svg class="battery" viewBox="0 0 23 12"><rect x=".6" y=".6" width="19" height="10.800" rx="1" /><path d="M2.300 2.300h13.200v7.400H2.300zM21 4q2 2 0 4z" /></svg>
        <span v-fit="84" class="date">Sun 6:38 PM</span>
        <svg class="search" viewBox="0 0 15 15"><circle cx="6" cy="6" r="4.800" /><path d="M9.500 9.500l5 5" /></svg>
        <svg class="siri" viewBox="-18 -18 36 36" v-html="dockArt.siri"></svg>
        <svg class="list" viewBox="0 0 18 12"><path d="M4 2h12M4 6h14M4 10h12M0 1.500h2M0 5.500h2M0 9.500h2" /></svg>
      </div>
    </header>

    <main class="browser">
      <div class="tabstrip">
        <div class="lights"><i class="red"></i><i class="yellow"></i><i class="green"></i></div>
        <div class="active-tab"><svg viewBox="0 0 10 10"><path d="M1 1l8 8M9 1L1 9" /></svg></div>
        <div class="tabs">
          <div v-for="(t, i) in tabs" :key="i" class="tab"><svg viewBox="3 0 10 16" v-html="icons[t]"></svg></div>
        </div>
        <svg class="plus" viewBox="0 0 12 12"><path d="M6 0v12M0 6h12" /></svg>
        <svg class="chevron" viewBox="0 0 10 6"><path d="M.7.7L5 5 9.300.7" /></svg>
      </div>

      <div class="toolbar">
        <svg class="nav-icon" viewBox="0 0 24 24"><path d="M20 11H7.830l5.590-5.590L12 4l-8 8 8 8 1.410-1.410L7.830 13H20v-2z" /></svg>
        <svg class="nav-icon dim" viewBox="0 0 24 24"><path d="M12 4l-1.410 1.410L16.170 11H4v2h12.170l-5.580 5.590L12 20l8-8z" /></svg>
        <svg class="nav-icon" viewBox="0 0 24 24"><path d="M17.650 6.350C16.200 4.900 14.210 4 12 4c-4.420 0-7.990 3.580-7.990 8s3.570 8 7.990 8c3.730 0 6.840-2.550 7.730-6h-2.080c-.82 2.330-3.040 4-5.650 4-3.310 0-6-2.690-6-6s2.690-6 6-6c1.660 0 3.140.69 4.220 1.780L13 11h7V4l-2.350 2.350z" /></svg>
        <div class="omnibox">
          <svg class="lock" viewBox="4 1 16 21"><path d="M18 8h-1V6c0-2.760-2.240-5-5-5S7 3.240 7 6v2H6c-1.100 0-2 .9-2 2v10c0 1.100.9 2 2 2h12c1.100 0 2-.9 2-2V10c0-1.100-.9-2-2-2zM9 6c0-1.660 1.340-3 3-3s3 1.340 3 3v2H9V6z" /></svg>
          <span v-fit="189" class="host">emsundigitalclock.netlify.app</span><span v-fit="71.5" class="path">/index.html</span>
          <svg class="share" viewBox="0 0 14 16"><path d="M4.500 6H1.700v8.500h10.600V6H9.500M7 10.500V1.500M4 4.500l3-3 3 3" /></svg>
          <svg class="star" viewBox="2 2 20 19"><path d="M22 9.240l-7.190-.62L12 2 9.190 8.630 2 9.240l5.460 4.730L5.820 21 12 17.270 18.180 21l-1.630-7.030L22 9.240zM12 15.400l-3.760 2.270 1-4.280-3.320-2.880 4.380-.38L12 6.100l1.710 4.040 4.380.38-3.320 2.880 1 4.280L12 15.400z" /></svg>
        </div>
        <div class="extensions">
          <div v-for="e in extensions" :key="e" class="ext"><svg viewBox="0 0 16 16" v-html="icons[e]"></svg></div>
        </div>
      </div>

      <nav class="bookmarks">
        <div v-for="(b, i) in bookmarks" :key="i" class="bookmark" :class="b.icon">
          <svg viewBox="0 0 16 16" v-html="icons[b.icon]"></svg>
          <svg v-if="b.extra" class="extra" viewBox="0 0 16 16" v-html="icons[b.extra]"></svg>
          <span v-if="b.text" v-fit="b.width ?? 0">{{ b.text }}</span>
        </div>
      </nav>

      <section class="page">
        <div class="links"><a v-fit="84">CLOCK</a><a v-fit="244">COUNTDOWN TIMER</a></div>
        <h1><span v-for="w in heading" :key="w.text" v-fit="w.width">{{ w.text }}</span></h1>
        <div class="clock"><span v-for="(c, i) in clock" :key="i" v-fit="c.width" :class="{ colon: c.text === ':', half: c.text === 'PM' }">{{ c.text }}</span></div>
        <footer><span v-fit="77">©emsun</span></footer>
      </section>
    </main>

    <div class="dock">
      <div v-for="d in dockApps" :key="d.name" class="app">
        <svg viewBox="-21.75 -24.3 43.5 52" v-html="dockArt[d.name]"></svg>
        <i v-if="d.running" class="dot"></i>
      </div>
      <div class="divider"></div>
      <div v-for="(d, i) in dockRight" :key="i" class="app">
        <svg viewBox="-21.75 -24.3 43.5 52" v-html="dockArt[d]"></svg>
      </div>
    </div>
  </div>
</template>

<style scoped>
.desktop {
  width: 1440px;
  height: 900px;
  overflow: hidden;
  display: flex;
  flex-direction: column;
  font-family: Inter, "Liberation Sans", sans-serif;
  background: linear-gradient(90deg, #49331f 0, #2b1a0e 120px, #281a12 1000px, #58351f 1340px, #a3683d 1440px);
}
.defs { position: absolute; }
span, a { white-space: nowrap; display: inline-block; flex: none; }
svg { display: block; flex: none; overflow: visible; }

.menubar {
  height: 22px;
  flex: none;
  display: flex;
  align-items: center;
  gap: 18px;
  padding: 0 23px 0 20px;
  box-sizing: border-box;
  color: #2b211b;
  font-size: 14px;
  line-height: 22px;
  background: linear-gradient(90deg, #d8cec6, #e4d5ca 250px, #efd9ca 440px, #fbe4cd 620px, #f7e0cf 830px, #fde6cd 950px, #e6d9ce 1050px, #dcd3cd 1180px, #d7cec9);
  margin-bottom: 1px;
}
.strong { font-weight: 700; }
.apple { width: 14px; height: 17px; fill: #2b211b; margin: -3px 2px 0 0; }
.status { margin-left: auto; display: flex; align-items: center; }
.elephant { width: 21px; height: 16px; fill: #2b211b; margin-right: 13px; }
.bluetooth { width: 10px; height: 16px; fill: none; stroke: #2b211b; margin-right: 15px; }
.wifi { width: 21px; height: 16px; margin-right: 11px; }
.wifi path { fill: none; stroke: #2b211b; stroke-width: 1.8; }
.percent { font-size: 12px; margin-right: 4px; }
.battery { width: 23px; height: 12px; margin-right: 19px; fill: #2b211b; }
.battery rect { fill: none; stroke: #2b211b; stroke-width: 1.2; }
.date { margin-right: 22px; }
.search { width: 15px; height: 15px; margin-right: 18px; fill: none; stroke: #2b211b; stroke-width: 1.4; }
.siri { width: 17px; height: 17px; margin-right: 11px; }
.list { width: 18px; height: 12px; stroke: #2b211b; stroke-width: 1.8; }

.browser {
  height: 820px;
  flex: none;
  border-radius: 6px;
  overflow: hidden;
  background: #fff;
  display: flex;
  flex-direction: column;
}
.tabstrip {
  height: 42px;
  flex: none;
  background: #dee1e6;
  display: flex;
  align-items: center;
  padding-left: 13px;
}
.lights { display: flex; gap: 8px; width: 65px; }
.lights i { width: 12px; height: 12px; border-radius: 50%; box-sizing: border-box; border: 1px solid rgba(0, 0, 0, .12); }
.red { background: #ff5b57; }
.yellow { background: #fdbb40; }
.green { background: #00c950; }
.active-tab {
  width: 32px;
  height: 34px;
  align-self: flex-end;
  background: #fff;
  border-radius: 8px 8px 0 0;
  display: flex;
  align-items: center;
  justify-content: center;
  position: relative;
}
.active-tab::before, .active-tab::after { content: ''; position: absolute; bottom: 0; width: 6px; height: 6px; }
.active-tab::before { right: 100%; background: radial-gradient(circle at 0 0, transparent 5.5px, #fff 6px); }
.active-tab::after { left: 100%; background: radial-gradient(circle at 100% 0, transparent 5.5px, #fff 6px); }
.active-tab svg { width: 9px; height: 9px; stroke: #3c4043; stroke-width: 1.8; margin-right: 1px; }
.tabs { display: flex; margin-top: 8px; }
.tab { width: 15px; height: 20px; box-sizing: border-box; padding-left: 2px; border-right: 1px solid #808387; display: flex; align-items: center; }
.tab svg { width: 10px; height: 16px; overflow: hidden; }
.plus { width: 12px; height: 12px; margin: 8px 67px 0 24px; stroke: #3c4043; stroke-width: 1.9; }
.chevron { width: 10px; height: 6px; margin-top: 8px; fill: none; stroke: #3c4043; stroke-width: 1.7; }

.toolbar { height: 34px; flex: none; display: flex; align-items: center; padding: 2px 0 0 13px; box-sizing: border-box; }
.nav-icon { width: 20px; height: 20px; fill: #54585d; margin-right: 12px; margin-left: -1px; }
.nav-icon + .nav-icon { margin-left: 0; }
.nav-icon.dim { fill: #babcbe; }
.omnibox {
  width: 840px;
  height: 28px;
  border-radius: 14px;
  background: #f1f3f4;
  box-sizing: border-box;
  padding: 0 10px 0 13px;
  display: flex;
  align-items: center;
  font-size: 14px;
  line-height: 18px;
  color: #202124;
}
.omnibox span { margin-top: -1px; }
.lock { width: 9px; height: 12px; fill: #5f6368; margin-right: 12px; }
.omnibox .path { color: #6a6e73; }
.share { width: 12px; height: 14px; margin: 0 18px 0 auto; fill: none; stroke: #5f6368; stroke-width: 1.5; }
.star { width: 14px; height: 13px; margin-right: 1px; fill: #5f6368; }
.extensions { display: flex; margin-left: 6px; }
.ext { width: 32px; display: flex; justify-content: center; }
.ext svg { width: 16px; height: 16px; }

.bookmarks {
  height: 36px;
  margin-top: -1px;
  flex: none;
  box-sizing: border-box;
  border-bottom: 1px solid #d5d7da;
  padding: 0 0 2px 14px;
  display: flex;
  align-items: center;
  gap: 16px;
  font-size: 12px;
  color: #3c4043;
}
.bookmark { display: flex; align-items: center; gap: 8px; }
.bookmark.quark { margin-right: 3.5px; }
.bookmark svg { width: 16px; height: 16px; }
.bookmark .extra { width: 15px; height: 15px; margin-right: -4px; }
.bookmark span { margin-top: -1px; }

.page {
  flex: 1;
  background: #000;
  color: #fff;
  display: flex;
  flex-direction: column;
  align-items: center;
}
.links { height: 30px; margin: 63px 0 0; display: flex; gap: 49px; font-size: 24px; line-height: 30px; font-weight: 800; }
h1 { margin: 222px 0 0; height: 70px; display: flex; gap: 21px; font-size: 60px; line-height: 70px; font-weight: 800; padding-right: 5px; }
.clock { margin-top: 45px; height: 60px; display: flex; gap: 21px; font-size: 49px; line-height: 60px; padding-right: 5px; -webkit-text-stroke: .5px #fff; }
.clock span { text-align: center; }
.clock .colon { margin: 0 -2px; font-weight: 600; }
.clock .half { font-size: 47px; }
footer { margin: auto 126px 2px 0; font-size: 19px; line-height: 22px; }

.dock {
  width: 1372px;
  height: 52px;
  margin: 5px 0 0 34px;
  flex: none;
  box-sizing: border-box;
  padding-left: 3px;
  display: flex;
  border-radius: 5px 5px 0 0;
  background:
    linear-gradient(180deg, rgba(60, 30, 10, .12), rgba(255, 190, 120, .12)),
    linear-gradient(90deg, #8b6c54, #95735a 250px, #a87a5a 430px, #a0745a 640px, #cb8e63 760px, #e2a464 850px, #d9a76d 910px, #bc9069 990px, #c08a65 1100px, #cc8d65);
}
.app { width: 43.4px; height: 52px; flex: none; position: relative; }
.app svg { width: 43.4px; height: 52px; }
.dot { position: absolute; left: 19.4px; top: 46px; width: 4px; height: 4px; border-radius: 50%; background: #351306; }
.divider { width: 19.5px; height: 38px; margin-top: 7px; flex: none; background: linear-gradient(90deg, transparent 10px, #8e5d3c 10px, #8e5d3c 11px, transparent 11px); }
</style>

<style>
body { margin: 0; overflow: hidden; }
</style>
